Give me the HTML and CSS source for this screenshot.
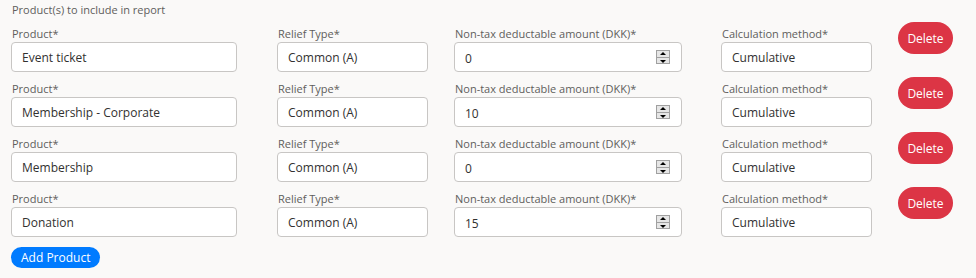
FILE: index.html
```html
<!DOCTYPE html>
<html lang="en">
<head>
    <meta charset="UTF-8">
    <meta name="viewport" content="width=device-width, initial-scale=1.0">
    <title>Products in report</title>

    <link rel="stylesheet" href="styles.css">
</head>
<body>

<div class="report">
    <div class="section-title">Product(s) to include in report</div>

    <div class="product-row">
        <div class="field field-product">
            <label>Product*</label>
            <input class="box" type="text" value="Event ticket">
        </div>
        <div class="field field-relief">
            <label>Relief Type*</label>
            <input class="box" type="text" value="Common (A)">
        </div>
        <div class="field field-amount">
            <label>Non-tax deductable amount (DKK)*</label>
            <div class="num-wrap">
                <input class="box" type="text" value="0">
                <span class="spinner"><span class="up"></span><span class="down"></span></span>
            </div>
        </div>
        <div class="field field-calc">
            <label>Calculation method*</label>
            <input class="box" type="text" value="Cumulative">
        </div>
        <button class="btn-delete">Delete</button>
    </div>

    <div class="product-row">
        <div class="field field-product">
            <label>Product*</label>
            <input class="box" type="text" value="Membership - Corporate">
        </div>
        <div class="field field-relief">
            <label>Relief Type*</label>
            <input class="box" type="text" value="Common (A)">
        </div>
        <div class="field field-amount">
            <label>Non-tax deductable amount (DKK)*</label>
            <div class="num-wrap">
                <input class="box" type="text" value="10">
                <span class="spinner"><span class="up"></span><span class="down"></span></span>
            </div>
        </div>
        <div class="field field-calc">
            <label>Calculation method*</label>
            <input class="box" type="text" value="Cumulative">
        </div>
        <button class="btn-delete">Delete</button>
    </div>

    <div class="product-row">
        <div class="field field-product">
            <label>Product*</label>
            <input class="box" type="text" value="Membership">
        </div>
        <div class="field field-relief">
            <label>Relief Type*</label>
            <input class="box" type="text" value="Common (A)">
        </div>
        <div class="field field-amount">
            <label>Non-tax deductable amount (DKK)*</label>
            <div class="num-wrap">
                <input class="box" type="text" value="0">
                <span class="spinner"><span class="up"></span><span class="down"></span></span>
            </div>
        </div>
        <div class="field field-calc">
            <label>Calculation method*</label>
            <input class="box" type="text" value="Cumulative">
        </div>
        <button class="btn-delete">Delete</button>
    </div>

    <div class="product-row">
        <div class="field field-product">
            <label>Product*</label>
            <input class="box" type="text" value="Donation">
        </div>
        <div class="field field-relief">
            <label>Relief Type*</label>
            <input class="box" type="text" value="Common (A)">
        </div>
        <div class="field field-amount">
            <label>Non-tax deductable amount (DKK)*</label>
            <div class="num-wrap">
                <input class="box" type="text" value="15">
                <span class="spinner"><span class="up"></span><span class="down"></span></span>
            </div>
        </div>
        <div class="field field-calc">
            <label>Calculation method*</label>
            <input class="box" type="text" value="Cumulative">
        </div>
        <button class="btn-delete">Delete</button>
    </div>

    <button class="btn-add">Add Product</button>
</div>

</body>
</html>
```

FILE: styles.css
```css
body {
    margin: 0;
    background-color: #faf9f8;
    font-family: 'Open Sans', 'Noto Sans', sans-serif;
    color: #323130;
}

.report {
    padding: 2px 0 0 11px;
}

.section-title {
    font-size: 11px;
    line-height: 16px;
    color: #605e5c;
    padding-left: 1px;
}

.product-row {
    display: flex;
    align-items: flex-start;
    height: 55px;
}

.field label {
    display: block;
    font-size: 11px;
    line-height: 16px;
    color: #605e5c;
    padding-left: 1px;
    margin-top: 8px;
}

.box {
    box-sizing: border-box;
    display: block;
    width: 100%;
    height: 30px;
    padding: 0 10px;
    border: 1px solid #c8c6c4;
    border-radius: 4px;
    background-color: #ffffff;
    font-family: 'Open Sans', 'Noto Sans', sans-serif;
    font-size: 12px;
    color: #323130;
    outline: none;
}

.field-product { width: 226px; margin-right: 40px; }
.field-relief  { width: 151px; margin-right: 26px; }
.field-amount  { width: 228px; margin-right: 39px; }
.field-calc    { width: 151px; margin-right: 26px; }

.num-wrap {
    position: relative;
}

.num-wrap .box {
    padding-top: 3px;
}

/* windows style spin buttons */
.spinner {
    position: absolute;
    right: 12px;
    top: 8px;
    width: 14px;
    height: 14px;
    display: flex;
    flex-direction: column;
    border: 1px solid #a0a0a0;
    background-color: #e6e6e6;
    box-sizing: border-box;
}

.spinner span {
    flex: 1;
    position: relative;
}

.spinner .up {
    border-bottom: 1px solid #a0a0a0;
}

.spinner .up::after,
.spinner .down::after {
    content: '';
    position: absolute;
    left: 3px;
    border-left: 3px solid transparent;
    border-right: 3px solid transparent;
}

.spinner .up::after {
    top: 1px;
    border-bottom: 3px solid #000000;
}

.spinner .down::after {
    top: 2px;
    border-top: 3px solid #000000;
}

.btn-delete {
    height: 32px;
    width: 55px;
    border: none;
    border-radius: 16px;
    background-color: #dc3545;
    color: #ffffff;
    font-family: 'Open Sans', 'Noto Sans', sans-serif;
    font-size: 12px;
    padding: 0;
    margin-top: 4px;
}

.btn-add {
    margin-top: 9px;
    height: 21px;
    padding: 0 10px;
    border: none;
    border-radius: 11px;
    background-color: #007bff;
    color: #ffffff;
    font-family: 'Open Sans', 'Noto Sans', sans-serif;
    font-size: 12px;
}
```
